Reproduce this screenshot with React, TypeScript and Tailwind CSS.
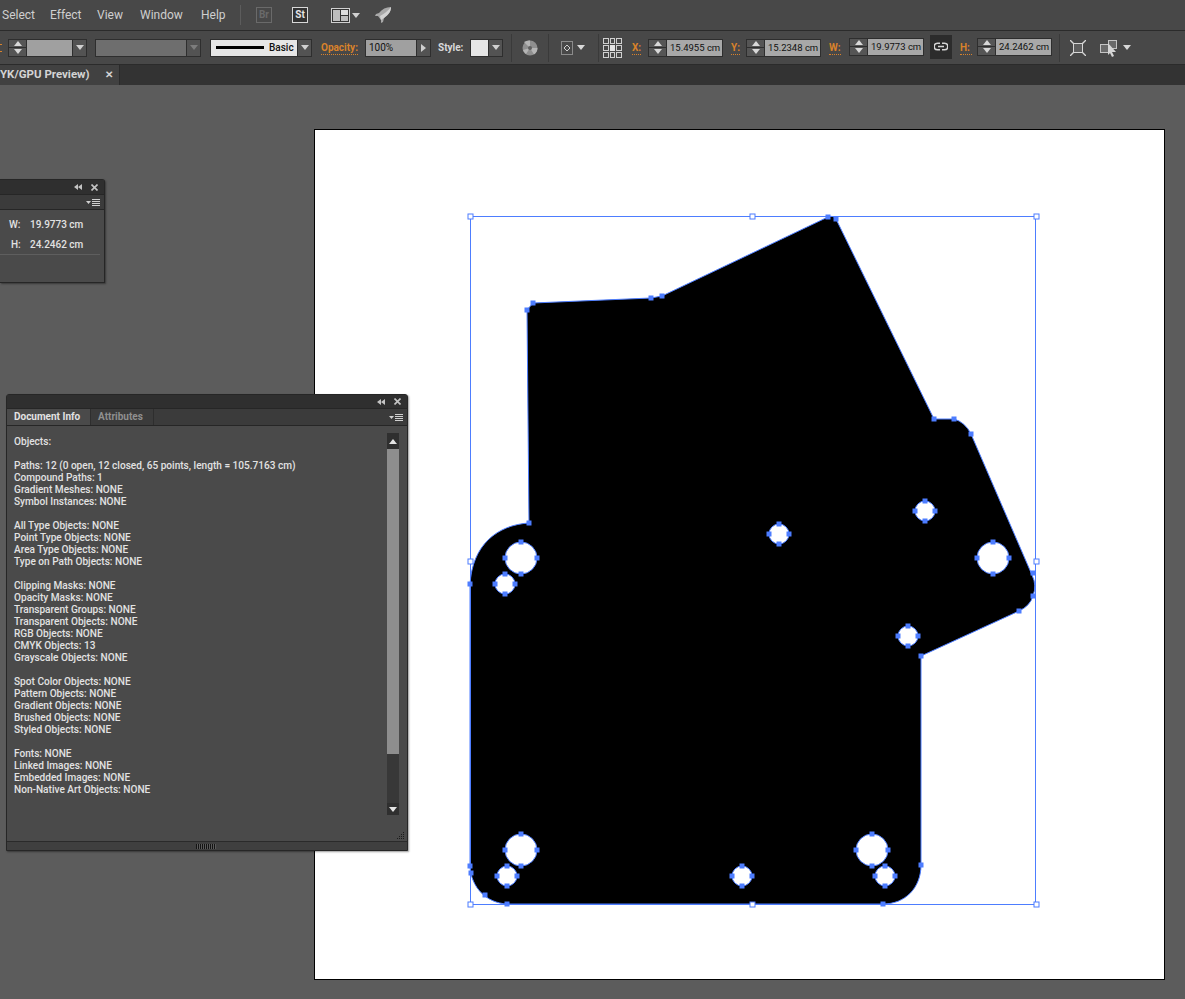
const font = "font-['Roboto',sans-serif]";

const docLines = [
  "Objects:",
  "",
  "Paths: 12 (0 open, 12 closed, 65 points, length = 105.7163 cm)",
  "Compound Paths: 1",
  "Gradient Meshes: NONE",
  "Symbol Instances: NONE",
  "",
  "All Type Objects: NONE",
  "Point Type Objects: NONE",
  "Area Type Objects: NONE",
  "Type on Path Objects: NONE",
  "",
  "Clipping Masks: NONE",
  "Opacity Masks: NONE",
  "Transparent Groups: NONE",
  "Transparent Objects: NONE",
  "RGB Objects: NONE",
  "CMYK Objects: 13",
  "Grayscale Objects: NONE",
  "",
  "Spot Color Objects: NONE",
  "Pattern Objects: NONE",
  "Gradient Objects: NONE",
  "Brushed Objects: NONE",
  "Styled Objects: NONE",
  "",
  "Fonts: NONE",
  "Linked Images: NONE",
  "Embedded Images: NONE",
  "Non-Native Art Objects: NONE",
];

const holes = [
  [521, 558, 15],
  [505, 584, 9],
  [779, 534, 9],
  [925, 511, 9],
  [993, 558, 15],
  [908, 636, 9],
  [521, 850, 15],
  [507, 876, 9],
  [742, 876, 9],
  [872, 850, 15],
  [885, 876, 9],
];

const anchors = [
  [533, 303], [527, 310], [651, 298], [662, 296], [828, 217], [836, 219],
  [934, 419], [954, 419], [971, 434], [1033, 573], [1033, 596], [1019, 611],
  [921, 656], [529, 523], [470, 584], [470, 866], [471, 873], [485, 895],
  [507, 904], [883, 904], [921, 865],
];

const handles = [
  [470, 216], [752, 216], [1036, 216], [470, 561], [1036, 561], [470, 904], [752, 904], [1036, 904],
];

const BLUE = "#4d7dff";

// little triangle used all over the toolbars
const Tri = ({ up = false, className = "" }: { up?: boolean; className?: string }) => (
  <svg width="8" height="5" viewBox="0 0 8 5" className={className}>
    <path d={up ? "M4 0L8 5H0Z" : "M0 0H8L4 5Z"} fill="currentColor" />
  </svg>
);

const Dropdown = ({ muted = false }: { muted?: boolean }) => (
  <div className={`w-[14px] h-full flex items-center justify-center bg-[#535353] border-l border-[#2e2e2e] ${muted ? "text-[#7d7d7d]" : "text-[#d0d0d0]"}`}>
    <Tri />
  </div>
);

const Spinner = () => (
  <div className="w-[18px] h-full flex flex-col bg-[#555555] text-[#d8d8d8] border-r border-[#2e2e2e]">
    <div className="flex-1 flex items-center justify-center border-b border-[#2e2e2e]"><Tri up /></div>
    <div className="flex-1 flex items-center justify-center"><Tri /></div>
  </div>
);

const Label = ({ text, className = "" }: { text: string; className?: string }) => (
  <span className={`text-[10px] font-bold text-[#d9822b] border-b border-dotted border-[#d9822b] leading-[13px] whitespace-nowrap ${className}`}>
    {text}
  </span>
);

const Measure = ({ value }: { value: string }) => (
  <div className="w-[75px] h-[18px] flex border border-[#2e2e2e]">
    <Spinner />
    <div className="flex-1 bg-[#a8a8a8] text-[#111111] text-[9.5px] leading-[16px] pl-[3px] whitespace-nowrap">{value}</div>
  </div>
);

const Separator = ({ className = "" }: { className?: string }) => (
  <div className={`w-px h-[28px] bg-[#3a3a3a] ${className}`} />
);

const MenuBar = () => (
  <div className="h-[31px] flex items-center bg-[#484848] border-b border-[#2b2b2b] text-[12px] text-[#cfcfcf]">
    <span className="ml-[2px] w-[48px]">Select</span>
    <span className="w-[47px]">Effect</span>
    <span className="w-[43px]">View</span>
    <span className="w-[61px]">Window</span>
    <span className="w-[39px]">Help</span>
    <div className="w-px h-[20px] bg-[#5c5c5c]" />
    <div className="ml-[15px] w-[16px] h-[16px] border border-[#6a6a6a] text-[#6a6a6a] text-[10px] font-bold leading-[14px] text-center">Br</div>
    <div className="ml-[20px] w-[16px] h-[16px] border border-[#d8d8d8] text-[#e4e4e4] text-[10px] font-bold leading-[14px] text-center bg-[#333333]">St</div>
    <svg width="19" height="15" viewBox="0 0 19 15" className="ml-[23px]">
      <rect x="0.5" y="0.5" width="18" height="14" fill="#333333" stroke="#d0d0d0" />
      <rect x="2" y="2" width="7" height="11" fill="#bdbdbd" />
      <rect x="10" y="2" width="7" height="5" fill="#dddddd" />
      <rect x="10" y="8" width="7" height="5" fill="#bdbdbd" />
    </svg>
    <Tri className="ml-[2px] text-[#d0d0d0]" />
    <svg width="18" height="18" viewBox="0 0 18 18" className="ml-[14px]">
      <path d="M17 1C12 1 8 3 5 7L2 8L1 10L4 10L7 14L7 17L9 16L10 12C14 9 17 6 17 1Z" fill="#a8a8a8" />
      <path d="M17 1C14 5 10 8 6 10L7 14L10 12C14 9 17 6 17 1Z" fill="#d2d2d2" />
    </svg>
  </div>
);

const ControlBar = () => (
  <div className="h-[34px] flex items-center bg-[#484848] border-b border-[#2b2b2b] text-[#d8d8d8]">
    <div className="w-[2px] h-[8px] border-y border-[#d9822b]" />
    <div className="ml-[6px] w-[79px] h-[18px] flex border border-[#2e2e2e]">
      <Spinner />
      <div className="flex-1 bg-[#a0a0a0]" />
      <Dropdown />
    </div>
    <div className="ml-[8px] w-[106px] h-[18px] flex border border-[#2e2e2e]">
      <div className="flex-1 bg-[#6e6e6e]" />
      <Dropdown muted />
    </div>
    <div className="ml-[9px] w-[102px] h-[18px] flex border border-[#2e2e2e]">
      <div className="flex-1 bg-[#e6e6e6] flex items-center pl-[5px] text-[10px] font-medium text-[#111111]">
        <div className="w-[48px] h-[3px] bg-black" />
        <span className="ml-[5px]">Basic</span>
      </div>
      <Dropdown />
    </div>
    <Label text="Opacity:" className="ml-[9px] w-[37px]" />
    <div className="ml-[7px] w-[66px] h-[18px] flex border border-[#2e2e2e]">
      <div className="flex-1 bg-[#a0a0a0] text-[#111111] text-[10px] leading-[16px] pl-[3px]">100%</div>
      <div className="w-[14px] h-full flex items-center justify-center bg-[#535353] border-l border-[#2e2e2e]">
        <svg width="5" height="8" viewBox="0 0 5 8"><path d="M0 0L5 4L0 8Z" fill="#cfcfcf" /></svg>
      </div>
    </div>
    <span className="ml-[7px] text-[10px] font-bold w-[32px]">Style:</span>
    <div className="w-[33px] h-[18px] flex border border-[#2e2e2e]">
      <div className="flex-1 bg-[#e6e6e6]" />
      <Dropdown />
    </div>
    <Separator className="ml-[8px]" />
    <svg width="16" height="16" viewBox="0 0 16 16" className="ml-[10px]">
      <circle cx="8" cy="8" r="7.5" fill="#8f8f8f" />
      <path d="M8 8L2 2A8 8 0 0 1 8 .5ZM8 8L15.5 8A8 8 0 0 1 12 14.5ZM8 8L1 10A8 8 0 0 0 4 14Z" fill="#b5b5b5" />
      <circle cx="8" cy="8" r="2" fill="#5f5f5f" />
    </svg>
    <Separator className="ml-[10px]" />
    <svg width="12" height="14" viewBox="0 0 12 14" className="ml-[12px]">
      <rect x="0.5" y="0.5" width="11" height="13" fill="none" stroke="#cfcfcf" strokeDasharray="1 1" />
      <path d="M6 4L9 7L6 10L3 7Z" fill="none" stroke="#cfcfcf" />
    </svg>
    <Tri className="ml-[4px]" />
    <Separator className="ml-[13px]" />
    <svg width="19" height="20" viewBox="0 0 19 20" className="ml-[4px]">
      <g fill="none" stroke="#d0d0d0">
        <rect x="0.5" y="0.5" width="5" height="5" />
        <rect x="7.5" y="0.5" width="4" height="5" />
        <rect x="13.5" y="0.5" width="5" height="5" />
        <rect x="0.5" y="7.5" width="5" height="5" />
        <rect x="13.5" y="7.5" width="5" height="5" />
        <rect x="0.5" y="14.5" width="5" height="5" />
        <rect x="7.5" y="14.5" width="4" height="5" />
        <rect x="13.5" y="14.5" width="5" height="5" />
      </g>
      <rect x="7" y="7" width="5" height="6" fill="#e4e4e4" />
    </svg>
    <Label text="X:" className="ml-[10px] w-[9px]" />
    <div className="ml-[7px]"><Measure value="15.4955 cm" /></div>
    <Label text="Y:" className="ml-[8px] w-[9px]" />
    <div className="ml-[6px]"><Measure value="15.2348 cm" /></div>
    <Label text="W:" className="ml-[8px] w-[12px]" />
    <div className="ml-[8px] mb-[2px]"><Measure value="19.9773 cm" /></div>
    <div className="ml-[6px] mb-[2px] w-[22px] h-[24px] bg-[#2c2c2c] flex items-center justify-center">
      <svg width="14" height="9" viewBox="0 0 14 9">
        <path d="M6 1.2H3.5a3.3 3.3 0 0 0 0 6.6H6M8 1.2h2.5a3.3 3.3 0 0 1 0 6.6H8M4 4.5h6" fill="none" stroke="#d4d4d4" strokeWidth="1.6" />
      </svg>
    </div>
    <Label text="H:" className="ml-[8px] w-[12px]" />
    <div className="ml-[5px] mb-[2px]"><Measure value="24.2462 cm" /></div>
    <Separator className="ml-[7px]" />
    <svg width="16" height="16" viewBox="0 0 16 16" className="ml-[10px]">
      <rect x="3.5" y="3.5" width="9" height="9" fill="#5e5e5e" stroke="#d6d6d6" />
      <path d="M0 0L4 4M16 0L12 4M0 16L4 12M16 16L12 12" stroke="#d6d6d6" strokeWidth="1.4" />
    </svg>
    <svg width="18" height="18" viewBox="0 0 18 18" className="ml-[14px]">
      <rect x="0.5" y="5.5" width="8" height="8" fill="#6a6a6a" stroke="#c4c4c4" />
      <rect x="8.5" y="1.5" width="8" height="8" fill="#6a6a6a" stroke="#c4c4c4" />
      <path d="M8 4L16 13L12 13L14 17L12 18L10 14L8 16Z" fill="#d6d6d6" />
    </svg>
    <Tri className="ml-[5px]" />
  </div>
);

const TabBar = () => (
  <div className="h-[20px] flex bg-[#333333]">
    <div className="w-[120px] flex items-center bg-[#414141] border-r border-[#2b2b2b] text-[11.5px] font-bold text-[#d4d4d4]">
      <span className="whitespace-nowrap">YK/GPU Preview)</span>
      <span className="ml-auto mr-[6px] text-[10px] leading-none">✕</span>
    </div>
  </div>
);

const PanelControls = () => (
  <div className="flex items-center justify-end gap-[9px] pr-[6px] h-full text-[#c4c4c4]">
    <svg width="8" height="6" viewBox="0 0 8 6"><path d="M4 0V6L0 3ZM8 0V6L4 3Z" fill="currentColor" /></svg>
    <svg width="7" height="7" viewBox="0 0 7 7"><path d="M0.5 0.5L6.5 6.5M6.5 0.5L0.5 6.5" stroke="currentColor" strokeWidth="1.6" /></svg>
  </div>
);

const PanelMenu = () => (
  <div className="flex items-center gap-[1px] text-[#d0d0d0]">
    <svg width="5" height="3" viewBox="0 0 5 3"><path d="M0 0H5L2.5 3Z" fill="currentColor" /></svg>
    <svg width="8" height="7" viewBox="0 0 8 7"><path d="M0 .5H8M0 2.5H8M0 4.5H8M0 6.5H8" stroke="currentColor" /></svg>
  </div>
);

const TransformPanel = () => (
  <div className="absolute left-0 top-[94px] w-[105px] h-[104px] bg-[#4a4a4a] border border-l-0 border-[#262626] rounded-tr-[3px] flex flex-col text-[10px] font-medium text-[#e2e2e2] shadow-[1px_1px_2px_rgba(0,0,0,0.4)]">
    <div className="h-[14px] bg-[#2f2f2f]"><PanelControls /></div>
    <div className="h-[16px] bg-[#3b3b3b] border-y border-[#262626] flex items-center justify-end pr-[4px]"><PanelMenu /></div>
    <div className="mt-[7px] ml-[9px] flex h-[14px] items-center">
      <span className="w-[21px]">W:</span>
      <span>19.9773 cm</span>
    </div>
    <div className="mt-[6px] ml-[11px] flex h-[14px] items-center">
      <span className="w-[19px]">H:</span>
      <span>24.2462 cm</span>
    </div>
    <div className="mt-[3px] h-px bg-[#5e5e5e] mr-[4px]" />
  </div>
);

const DocumentInfoPanel = () => (
  <div className="absolute left-[6px] top-[309px] w-[402px] h-[457px] bg-[#4a4a4a] border border-[#262626] rounded-t-[3px] flex flex-col shadow-[1px_1px_2px_rgba(0,0,0,0.4)]">
    <div className="h-[13px] bg-[#2f2f2f] shrink-0"><PanelControls /></div>
    <div className="h-[18px] shrink-0 flex items-stretch bg-[#3b3b3b] border-y border-[#262626] text-[10px] font-bold whitespace-nowrap">
      <div className="w-[84px] bg-[#4a4a4a] text-[#e2e2e2] flex items-center pl-[7px] pb-[1px] border-r border-[#2e2e2e]">Document Info</div>
      <div className="w-[63px] text-[#8f8f8f] flex items-center pl-[7px] pb-[1px] border-r border-[#2e2e2e]">Attributes</div>
      <div className="ml-auto mr-[4px] flex items-center"><PanelMenu /></div>
    </div>
    <div className="flex-1 flex pl-[7px] pr-[8px] pt-[7px]">
      <div className="flex-1 text-[10.1px] font-medium leading-[12px] text-[#e2e2e2] whitespace-pre">
        <div className="h-[3px]" />
        {docLines.map((line, i) => (
          <div key={i} className="h-[12px]">{line}</div>
        ))}
      </div>
      <div className="w-[12px] h-[382px] flex flex-col bg-[#383838]">
        <div className="h-[16px] flex items-center justify-center bg-[#2f2f2f] text-[#e4e4e4]"><Tri up /></div>
        <div className="h-[305px] bg-[#8e8e8e]" />
        <div className="flex-1" />
        <div className="h-[12px] flex items-center justify-center bg-[#2f2f2f] text-[#e4e4e4]"><Tri /></div>
      </div>
    </div>
    <div className="h-[9px] shrink-0 bg-[#3f3f3f] border-t border-[#2a2a2a] flex items-center justify-center pr-[2px]">
      <div className="w-[20px] h-[5px] bg-[repeating-linear-gradient(90deg,#141414_0px,#141414_1px,#5a5a5a_1px,#5a5a5a_2px)]" />
    </div>
    <svg width="9" height="9" viewBox="0 0 9 9" className="absolute right-[2px] bottom-[10px]">
      <path d="M7 1h1v1H7zM5 3h1v1H5zM7 3h1v1H7zM3 5h1v1H3zM5 5h1v1H5zM7 5h1v1H7zM1 7h1v1H1zM3 7h1v1H3zM5 7h1v1H5zM7 7h1v1H7z" fill="#1c1c1c" />
    </svg>
  </div>
);

const Artboard = () => (
  <div className="absolute left-[314px] top-[44px] w-[851px] h-[851px] bg-white border border-black">
    <svg width="849" height="849" viewBox="315 130 849 849" className="block">
      <path
        d="M527 310L533 303L651 298L662 296L828 217Q834 215 836 219L934 419L954 419Q965 422 971 434L1032 575Q1037 585 1033 596Q1030 606 1019 611L921 656L921 865C921 888 905 904 883 904L507 904C487 903 471 888 470 866L470 585C472 545 497 525 529 523Z"
        fill="#000000"
        stroke={BLUE}
        strokeWidth="1"
      />
      <rect x="470.5" y="216.5" width="565" height="688" fill="none" stroke={BLUE} />
      {holes.map(([x, y, r]) => (
        <circle key={`${x}-${y}`} cx={x} cy={y} r={r + 1} fill="#ffffff" stroke={BLUE} />
      ))}
      {holes.flatMap(([x, y, r]) =>
        [[0, -1], [0, 1], [-1, 0], [1, 0]].map(([dx, dy]) => (
          <rect key={`${x}-${y}-${dx}-${dy}`} x={x + dx * (r + 1) - 2.5} y={y + dy * (r + 1) - 2.5} width="5" height="5" fill={BLUE} />
        ))
      )}
      {anchors.map(([x, y]) => (
        <rect key={`${x}-${y}`} x={x - 2.5} y={y - 2.5} width="5" height="5" fill={BLUE} />
      ))}
      {handles.map(([x, y]) => (
        <rect key={`${x}-${y}`} x={x - 2} y={y - 2} width="5" height="5" fill="#ffffff" stroke={BLUE} />
      ))}
    </svg>
  </div>
);

export default function App() {
  return (
    <div className={`w-[1185px] h-[999px] flex flex-col overflow-hidden bg-[#5c5c5c] ${font}`}>
      <MenuBar />
      <ControlBar />
      <TabBar />
      <div className="relative flex-1">
        <Artboard />
        <TransformPanel />
        <DocumentInfoPanel />
      </div>
    </div>
  );
}
